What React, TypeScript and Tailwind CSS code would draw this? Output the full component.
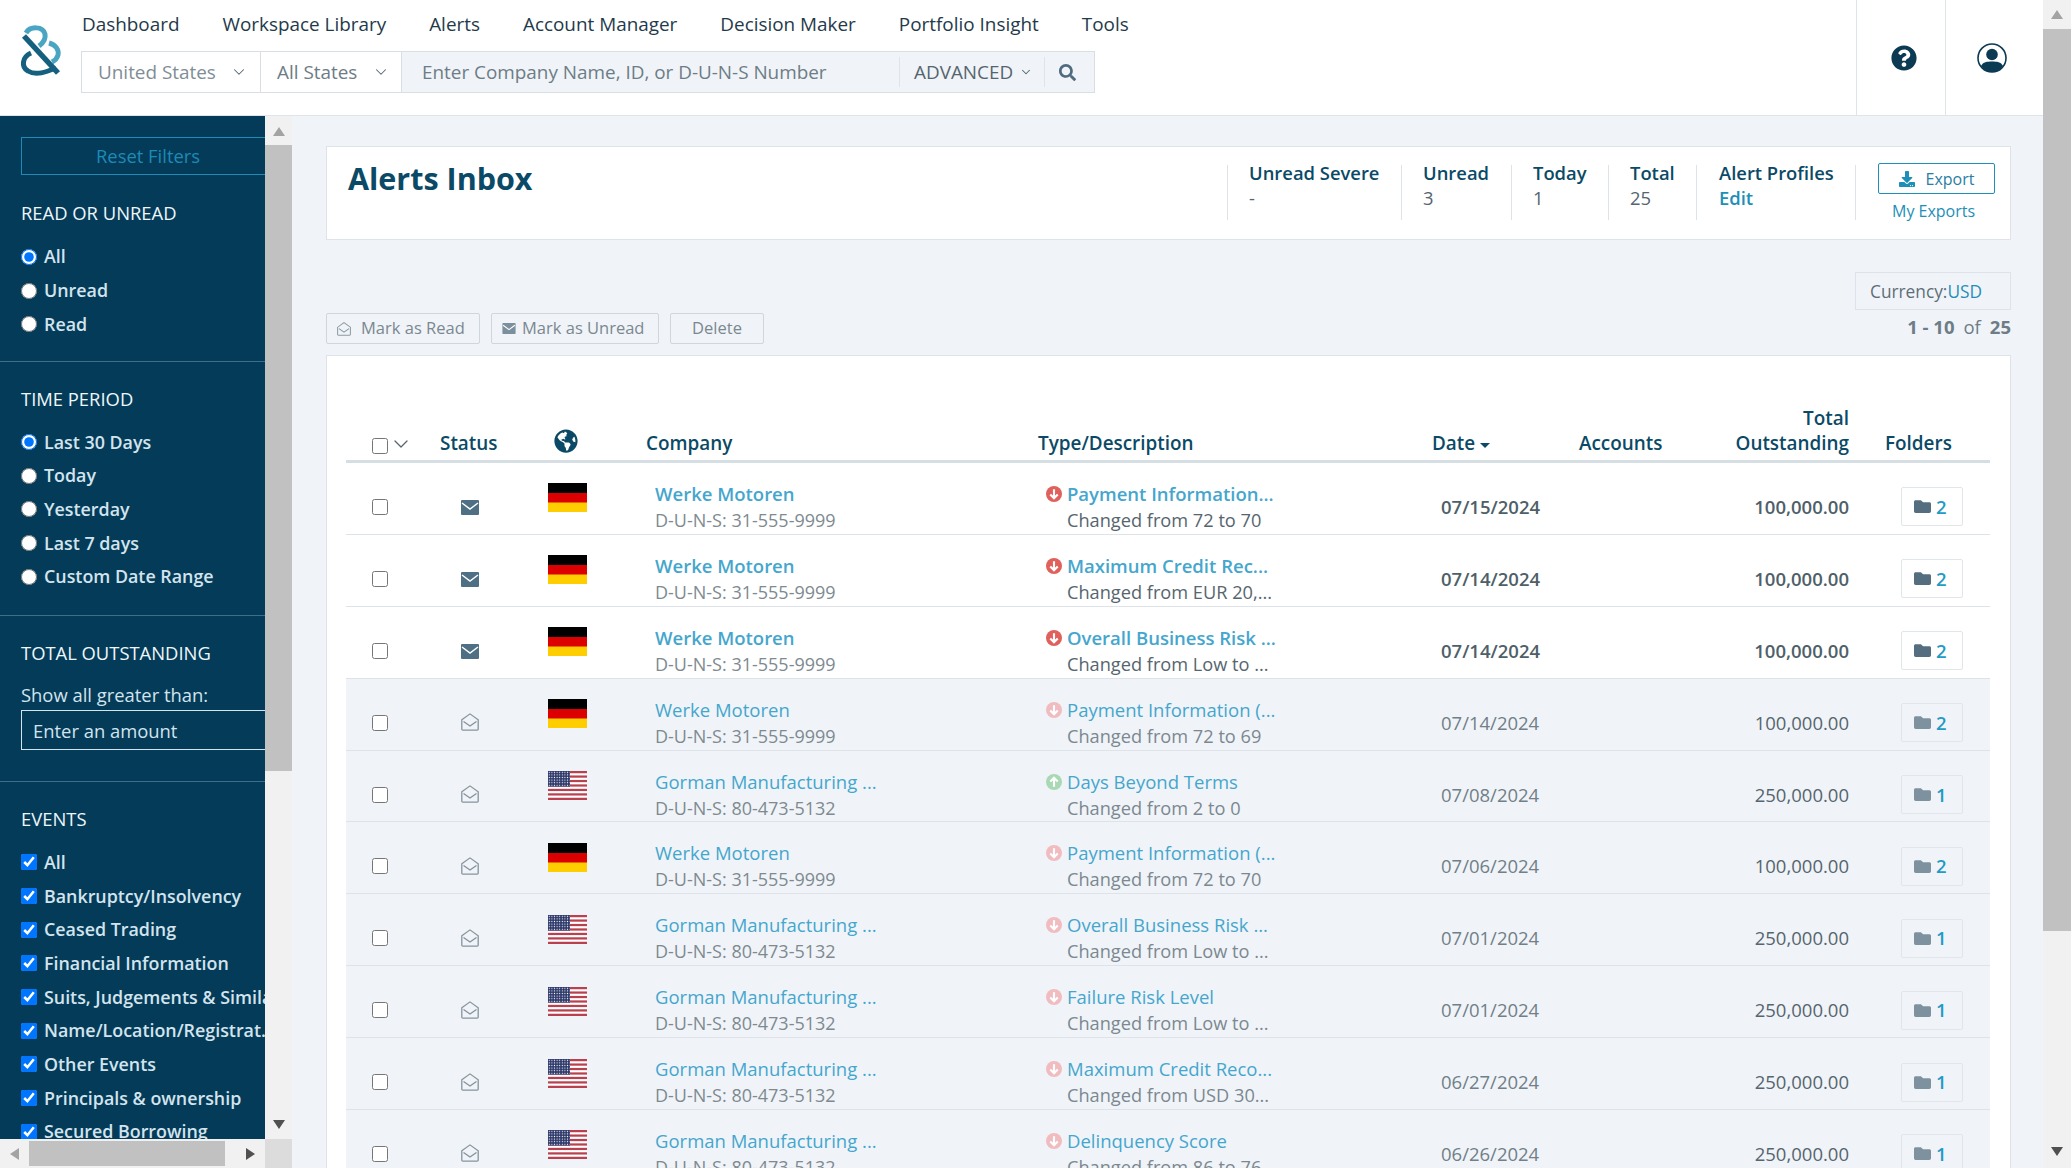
import { ChevronDown } from "lucide-react"
import { FaDownload, FaFolder, FaGlobeAmericas, FaQuestionCircle, FaSearch } from "react-icons/fa"

const navItems = ["Dashboard", "Workspace Library", "Alerts", "Account Manager", "Decision Maker", "Portfolio Insight", "Tools"]

const werke = { company: "Werke Motoren", duns: "31-555-9999", country: "de", amount: "100,000.00", folders: 2 }
const gorman = { company: "Gorman Manufacturing ...", duns: "80-473-5132", country: "us", amount: "250,000.00", folders: 1 }

const alerts = [
  { ...werke, unread: true, dir: "down", type: "Payment Information...", desc: "Changed from 72 to 70", date: "07/15/2024" },
  { ...werke, unread: true, dir: "down", type: "Maximum Credit Rec...", desc: "Changed from EUR 20,...", date: "07/14/2024" },
  { ...werke, unread: true, dir: "down", type: "Overall Business Risk ...", desc: "Changed from Low to ...", date: "07/14/2024" },
  { ...werke, unread: false, dir: "down", type: "Payment Information (...", desc: "Changed from 72 to 69", date: "07/14/2024" },
  { ...gorman, unread: false, dir: "up", type: "Days Beyond Terms", desc: "Changed from 2 to 0", date: "07/08/2024" },
  { ...werke, unread: false, dir: "down", type: "Payment Information (...", desc: "Changed from 72 to 70", date: "07/06/2024" },
  { ...gorman, unread: false, dir: "down", type: "Overall Business Risk ...", desc: "Changed from Low to ...", date: "07/01/2024" },
  { ...gorman, unread: false, dir: "down", type: "Failure Risk Level", desc: "Changed from Low to ...", date: "07/01/2024" },
  { ...gorman, unread: false, dir: "down", type: "Maximum Credit Reco...", desc: "Changed from USD 30...", date: "06/27/2024" },
  { ...gorman, unread: false, dir: "down", type: "Delinquency Score", desc: "Changed from 86 to 76", date: "06/26/2024" },
]

const stats = [
  { label: "Unread Severe", value: "-", width: "w-[174px]" },
  { label: "Unread", value: "3", width: "w-[110px]" },
  { label: "Today", value: "1", width: "w-[97px]" },
  { label: "Total", value: "25", width: "w-[88px]" },
]

const rowGrid = "grid grid-cols-[84px_80px_136px_392px_394px_148px_110px_159px_141px]"

function Logo() {
  return (
    <svg width="70" height="75" viewBox="0 0 70 75" fill="none" className="ml-[10px] mt-[15px] shrink-0">
      <path d="M16 18C20 11 33 11 35 19C36 24 33 28 29 31" stroke="#4aa5c2" strokeWidth="5" />
      <path d="M39 28C46 30 49 35 48 40C47 44 44 46 42 47" stroke="#4aa5c2" strokeWidth="5" />
      <path d="M21 38C12 42 11 52 18 56C26 61 36 57 46 53" stroke="#15607f" strokeWidth="5" />
      <path d="M14 21L48 58" stroke="#15607f" strokeWidth="5.5" />
    </svg>
  )
}

function UserIcon() {
  return (
    <svg width="30" height="30" viewBox="0 0 30 30">
      <circle cx="15" cy="15" r="14" fill="#fff" stroke="#0b3a52" strokeWidth="1.6" />
      <circle cx="15" cy="11.5" r="5.8" fill="#0b3a52" />
      <path d="M4 23C6 19 10 18.5 15 18.5C20 18.5 24 19 26 23C23.5 27 19.5 29 15 29C10.5 29 6.5 27 4 23Z" fill="#0b3a52" />
    </svg>
  )
}

function ClosedMail() {
  return (
    <svg width="18" height="15" viewBox="0 0 18 15" className="mt-[1px]">
      <rect width="18" height="15" rx="1" fill="#4f6f85" />
      <path d="M1 3L9 9L17 3" fill="none" stroke="#fff" strokeWidth="1.5" />
    </svg>
  )
}

function OpenMail({ color = "#84949e", size = 18, className }: { color?: string; size?: number; className?: string }) {
  return (
    <svg width={size} height={size} viewBox="0 0 18 20" preserveAspectRatio="none" fill="none" stroke={color} strokeWidth="1.3" className={className}>
      <path d="M0.8 7.5L9 1L17.2 7.5V18C17.2 18.6 16.8 19 16.2 19H1.8C1.2 19 0.8 18.6 0.8 18Z" />
      <path d="M2.5 9.5L9 14.5L15.5 9.5" />
    </svg>
  )
}

function Flag({ country }: { country: string }) {
  if (country === "de") {
    return (
      <svg width="39" height="29" viewBox="0 0 39 29" className="-mt-[18px] ml-[38px]">
        <rect width="39" height="10" fill="#000" />
        <rect y="10" width="39" height="10" fill="#dd0000" />
        <rect y="19.5" width="39" height="9.5" fill="#ffce00" />
      </svg>
    )
  }
  return (
    <svg width="39" height="29" viewBox="0 0 39 29" className="-mt-[18px] ml-[38px]">
      <defs>
        <pattern id="stars" width="2.6" height="2.6" patternUnits="userSpaceOnUse">
          <circle cx="1.3" cy="1.3" r="0.6" fill="#fff" />
        </pattern>
      </defs>
      <rect width="39" height="29" fill="#fff" />
      {[0, 1, 2, 3, 4, 5, 6].map((i) => (
        <rect key={i} y={i * 4.46} width="39" height="2.23" fill="#b8404f" />
      ))}
      <rect width="22" height="15.6" fill="#2f3a6b" />
      <rect width="22" height="15.6" fill="url(#stars)" />
    </svg>
  )
}

function TrendIcon({ dir, unread }: { dir: string; unread: boolean }) {
  const fill = dir === "up" ? "#a9d8b4" : unread ? "#e0605c" : "#f1bcc0"
  return (
    <svg width="16" height="16" viewBox="0 0 15 15" className="mt-[5px] -ml-[1px] shrink-0">
      <circle cx="7.5" cy="7.5" r="7.5" fill={fill} />
      <path
        d={dir === "up" ? "M7.5 12V4M4 7L7.5 3.5L11 7" : "M7.5 3V11M4 8L7.5 11.5L11 8"}
        fill="none"
        stroke="#fff"
        strokeWidth="2"
      />
    </svg>
  )
}

function Radio({ label, checked }: { label: string; checked?: boolean }) {
  return (
    <label className="flex h-[33.7px] items-center gap-[7px] whitespace-nowrap text-[17.85px] font-semibold text-[#d3e4ee]">
      <input type="radio" readOnly checked={!!checked} className="m-0 h-[16px] w-[16px] shrink-0" />
      {label}
    </label>
  )
}

function Check({ label }: { label: string }) {
  return (
    <label className="flex h-[33.7px] items-center gap-[7px] whitespace-nowrap text-[17.85px] font-semibold text-[#d3e4ee]">
      <input type="checkbox" readOnly checked className="m-0 h-[16px] w-[16px] shrink-0" />
      {label}
    </label>
  )
}

function Heading({ children }: { children: string }) {
  return <div className="h-[24px] text-[18.4px] leading-[24px] text-[#eef6fa]">{children}</div>
}

function Arrow({ dir, className }: { dir: "up" | "down" | "left" | "right"; className?: string }) {
  const points = { up: "0,9 6,0 12,9", down: "0,0 12,0 6,9", left: "9,0 9,12 0,6", right: "0,0 0,12 9,6" }[dir]
  const horizontal = dir === "left" || dir === "right"
  return (
    <svg width={horizontal ? 9 : 12} height={horizontal ? 12 : 9} className={className}>
      <polygon points={points} fill="currentColor" />
    </svg>
  )
}

function Sidebar() {
  return (
    <div className="flex w-[292px] shrink-0 flex-col">
      <div className="flex min-h-0 flex-1">
        <div className="w-[265px] overflow-hidden bg-[#033b58]">
          <div className="border-b border-[#3f6e88] pb-[20px] pl-[21px] pt-[21px]">
            <button className="flex h-[38px] w-[300px] items-center border border-[#1f8ab5] pl-[74px] text-[18.4px] text-[#1e8ab6]">
              Reset Filters
            </button>
            <div className="mt-[26px]">
              <Heading>READ OR UNREAD</Heading>
            </div>
            <div className="mt-[15px]">
              <Radio label="All" checked />
              <Radio label="Unread" />
              <Radio label="Read" />
            </div>
          </div>
          <div className="border-b border-[#3f6e88] pb-[21px] pl-[21px] pt-[25px]">
            <Heading>TIME PERIOD</Heading>
            <div className="mt-[14px]">
              <Radio label="Last 30 Days" checked />
              <Radio label="Today" />
              <Radio label="Yesterday" />
              <Radio label="Last 7 days" />
              <Radio label="Custom Date Range" />
            </div>
          </div>
          <div className="border-b border-[#3f6e88] pb-[31px] pl-[21px] pt-[25px]">
            <Heading>TOTAL OUTSTANDING</Heading>
            <div className="mt-[18px] h-[24px] text-[18.4px] leading-[24px] text-[#d3e4ee]">Show all greater than:</div>
            <div className="mt-[3px] flex h-[40px] w-[300px] items-center border border-[#d3e4ee] pl-[11px] pt-[2px] text-[18.4px] text-[#d3e4ee]">
              Enter an amount
            </div>
          </div>
          <div className="pl-[21px] pt-[25px]">
            <Heading>EVENTS</Heading>
            <div className="mt-[15px]">
              <Check label="All" />
              <Check label="Bankruptcy/Insolvency" />
              <Check label="Ceased Trading" />
              <Check label="Financial Information" />
              <Check label="Suits, Judgements & Similar" />
              <Check label="Name/Location/Registrat..." />
              <Check label="Other Events" />
              <Check label="Principals & ownership" />
              <Check label="Secured Borrowing" />
            </div>
          </div>
        </div>
        <div className="flex w-[27px] flex-col bg-[#f1f1f1] text-[#505050]">
          <div className="flex h-[29px] items-center justify-center pt-[1px] text-[#a3a3a3]">
            <Arrow dir="up" />
          </div>
          <div className="h-[626px] bg-[#c1c1c1]" />
          <div className="flex flex-1 items-end justify-center pb-[10px]">
            <Arrow dir="down" />
          </div>
        </div>
      </div>
      <div className="flex h-[29px] shrink-0">
        <div className="flex w-[265px] items-center bg-[#f1f1f1]">
          <div className="flex w-[29px] justify-center text-[#a3a3a3]">
            <Arrow dir="left" />
          </div>
          <div className="h-[25px] w-[196px] bg-[#c1c1c1]" />
          <div className="flex w-[40px] justify-end pr-[10px] text-[#505050]">
            <Arrow dir="right" />
          </div>
        </div>
        <div className="w-[27px] bg-[#dcdcdc]" />
      </div>
    </div>
  )
}

function Header() {
  return (
    <header className="flex h-[116px] shrink-0 border-b border-[#dfe4e9] bg-white">
      <Logo />
      <div className="ml-[2px] flex-1">
        <nav className="flex h-[51px] gap-[43px] pt-[11px] text-[18.9px] leading-[26px] text-[#1f3a4b]">
          {navItems.map((item) => (
            <span key={item}>{item}</span>
          ))}
        </nav>
        <div className="-ml-[1px] flex h-[42px] w-[1014px] border border-[#d8dee3] text-[18.9px]">
          <div className="flex w-[179px] items-center justify-between border-r border-[#d8dee3] pl-[16px] pr-[12px] text-[#7f8d96]">
            United States
            <ChevronDown size={18} strokeWidth={1.4} className="shrink-0 text-[#55656f]" />
          </div>
          <div className="flex w-[141px] items-center justify-between border-r border-[#d8dee3] pl-[16px] pr-[11px] text-[#6d7c86]">
            All States
            <ChevronDown size={18} strokeWidth={1.4} className="shrink-0 text-[#55656f]" />
          </div>
          <div className="flex flex-1 items-center bg-[#f0f4f8]">
            <span className="w-[497px] whitespace-nowrap pl-[20px] text-[#6d7c86]">Enter Company Name, ID, or D-U-N-S Number</span>
            <span className="flex h-[30px] w-[146px] items-center gap-[6px] border-x border-[#dfe4e9] pl-[14px] text-[#55656f]">
              ADVANCED
              <ChevronDown size={14} strokeWidth={1.8} />
            </span>
            <FaSearch size={17} className="ml-[14px] text-[#4f6b7d]" />
          </div>
        </div>
      </div>
      <div className="flex w-[89px] items-center justify-center border-l border-[#dfe4e9] pl-[5px] text-[#0b3a52]">
        <FaQuestionCircle size={26} />
      </div>
      <div className="flex w-[98px] items-center justify-center border-l border-[#dfe4e9] pr-[5px]">
        <UserIcon />
      </div>
    </header>
  )
}

function AlertsCard() {
  return (
    <div className="flex h-[94px] items-start justify-between border border-[#dde3e8] bg-white">
      <h1 className="ml-[21px] mt-[11px] text-[30.5px] font-bold leading-[40px] text-[#0b4a66]">Alerts Inbox</h1>
      <div className="flex">
        {stats.map((s) => (
          <div key={s.label} className={`mt-[18px] h-[55px] border-l border-[#dde3e8] pl-[21px] ${s.width}`}>
            <div className="-mt-[5px] text-[18.4px] font-semibold leading-[26px] text-[#0b4a66]">{s.label}</div>
            <div className="text-[18.4px] leading-[24px] text-[#55656f]">{s.value}</div>
          </div>
        ))}
        <div className="mt-[18px] h-[55px] w-[159px] border-l border-[#dde3e8] pl-[22px]">
          <div className="-mt-[5px] text-[18.4px] font-semibold leading-[26px] text-[#0b4a66]">Alert Profiles</div>
          <div className="text-[18.4px] font-semibold leading-[24px] text-[#1d8fb8]">Edit</div>
        </div>
        <div className="mt-[18px] h-[55px] w-[155px] border-l border-[#dde3e8] pl-[22px]">
          <div className="-mt-[2px] flex h-[31px] w-[117px] items-center justify-center gap-[11px] rounded-[2px] border border-[#1d8fb8] text-[16px] text-[#2a7ea3]">
            <FaDownload size={16} className="text-[#1d8fb8]" />
            Export
          </div>
          <div className="mt-[5px] pl-[14px] text-[16px] leading-[24px] text-[#1d8fb8]">My Exports</div>
        </div>
      </div>
    </div>
  )
}

function Toolbar() {
  const btn = "flex h-[31px] items-center rounded-[2px] border border-[#cfd6dc] text-[16.5px] text-[#7b8890]"
  return (
    <div className="flex h-[115px] justify-between pt-[32px]">
      <div className="mt-[41px] flex gap-[11px]">
        <div className={`${btn} w-[154px] gap-[10px] pl-[10px]`}>
          <OpenMail size={14} color="#8a98a1" />
          Mark as Read
        </div>
        <div className={`${btn} w-[168px] gap-[6px] pl-[10px]`}>
          <svg width="14" height="11" viewBox="0 0 18 15">
            <rect width="18" height="15" rx="1" fill="#7b8f9d" />
            <path d="M1 3L9 9L17 3" fill="none" stroke="#fff" strokeWidth="1.5" />
          </svg>
          Mark as Unread
        </div>
        <div className={`${btn} w-[94px] justify-center`}>Delete</div>
      </div>
      <div className="flex flex-col items-end">
        <div className="flex h-[38px] w-[156px] items-center border border-[#dde3e8] pl-[14px] pt-[1px] text-[17.3px] text-[#5e6e78]">
          Currency:<span className="text-[#1d8fb8]">USD</span>
        </div>
        <div className="mt-[5px] text-[18.5px] leading-[24px] text-[#6d7c86]">
          <span className="font-bold">1 - 10</span>
          <span className="mx-[9px]">of</span>
          <span className="font-bold">25</span>
        </div>
      </div>
    </div>
  )
}

function TableHead() {
  return (
    <div className={`${rowGrid} h-[107px] items-end border-b-[3px] border-[#d5dee3] pb-[4px] text-[18.9px] font-semibold leading-[25px] text-[#0b4a66]`}>
      <div className="flex items-center pl-[26px]">
        <input type="checkbox" readOnly className="m-0 -mt-[1px] h-[16px] w-[16px]" />
        <ChevronDown size={24} strokeWidth={1.3} className="ml-[1px] -mt-[4px] text-[#55656f]" />
      </div>
      <div className="pl-[10px]">Status</div>
      <div className="pl-[44px]">
        <FaGlobeAmericas size={24} className="mb-[3px]" />
      </div>
      <div>Company</div>
      <div>Type/Description</div>
      <div className="flex items-center gap-[5px]">
        Date
        <span className="mt-[3px] border-x-[5px] border-t-[5px] border-x-transparent border-t-[#0b4a66]" />
      </div>
      <div className="-ml-[1px]">Accounts</div>
      <div className="text-right">
        Total
        <br />
        Outstanding
      </div>
      <div className="pl-[36px]">Folders</div>
    </div>
  )
}

function AlertRow({ alert }: { alert: (typeof alerts)[number] }) {
  const weight = alert.unread ? "font-semibold" : "font-normal"
  return (
    <div className={`${rowGrid} h-[71.9px] items-center border-b border-[#dde3e8] pt-[17px] text-[18.5px] leading-[26px] ${alert.unread ? "" : "bg-[#f0f4f8]"}`}>
      <div className="flex pl-[26px]">
        <input type="checkbox" readOnly className="m-0 h-[16px] w-[16px]" />
      </div>
      <div className="flex justify-center">{alert.unread ? <ClosedMail /> : <OpenMail className="-mt-[1px]" />}</div>
      <div className="flex">
        <Flag country={alert.country} />
      </div>
      <div className="whitespace-nowrap pl-[9px]">
        <div className={`${weight} text-[#45a6cd]`}>{alert.company}</div>
        <div className="text-[18px] text-[#7e8a90]">D-U-N-S: {alert.duns}</div>
      </div>
      <div className="flex gap-[5px] whitespace-nowrap pl-[9px]">
        <TrendIcon dir={alert.dir} unread={alert.unread} />
        <div>
          <div className={`${weight} text-[#45a6cd]`}>{alert.type}</div>
          <div className={`text-[18.2px] ${alert.unread ? "text-[#56656e]" : "text-[#7b8890]"}`}>{alert.desc}</div>
        </div>
      </div>
      <div className={`pl-[9px] ${alert.unread ? "font-semibold text-[#4f5f69]" : "text-[#717f88]"}`}>{alert.date}</div>
      <div />
      <div className={`text-right ${alert.unread ? "font-semibold text-[#4f5f69]" : "text-[#56656e]"}`}>{alert.amount}</div>
      <div className="pl-[52px]">
        <div className={`flex h-[39px] w-[62px] items-center gap-[5px] rounded-[2px] border border-[#e1e6ea] pl-[12px] font-semibold text-[#1f9bc4] ${alert.unread ? "bg-white" : ""}`}>
          <FaFolder size={17} className={alert.unread ? "text-[#546e7f]" : "text-[#7d929e]"} />
          {alert.folders}
        </div>
      </div>
    </div>
  )
}

export default function App() {
  return (
    <div className="flex h-[1168px] w-[2071px] overflow-hidden bg-white font-['Open_Sans',sans-serif]">
      <div className="flex min-w-0 flex-1 flex-col">
        <Header />
        <div className="flex min-h-0 flex-1">
          <Sidebar />
          <main className="min-w-0 flex-1 overflow-hidden bg-[#f0f4f8] pl-[34px] pr-[32px] pt-[30px]">
            <AlertsCard />
            <Toolbar />
            <div className="border border-[#dde3e8] bg-white pl-[19px] pr-[20px]">
              <TableHead />
              {alerts.map((alert, i) => (
                <AlertRow key={i} alert={alert} />
              ))}
            </div>
          </main>
        </div>
      </div>
      <div className="flex w-[28px] shrink-0 flex-col bg-[#f1f1f1]">
        <div className="flex h-[29px] items-center justify-center text-[#a3a3a3]">
          <Arrow dir="up" />
        </div>
        <div className="h-[902px] bg-[#c1c1c1]" />
        <div className="flex flex-1 items-end justify-center pb-[12px] text-[#505050]">
          <Arrow dir="down" />
        </div>
      </div>
    </div>
  )
}
